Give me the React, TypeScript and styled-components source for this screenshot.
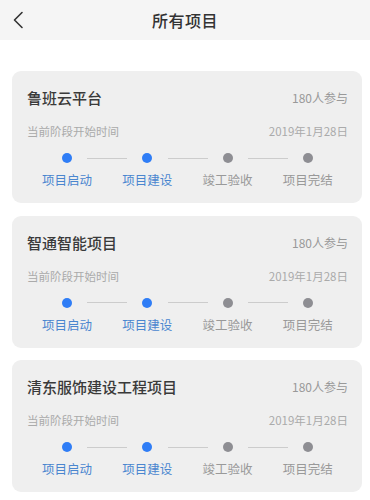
import styled, { createGlobalStyle } from "styled-components";

const GlobalStyle = createGlobalStyle`
  html, body { margin: 0; padding: 0; background: #ffffff; }
  body {
    font-family: "Noto Sans CJK SC", "Noto Sans", sans-serif;
    -webkit-font-smoothing: antialiased;
  }
`;

type Project = {
  name: string;
  people: number;
  date: string;
  current: number;
};

const STAGES = ["项目启动", "项目建设", "竣工验收", "项目完结"];

const projects: Project[] = [
  { name: "鲁班云平台", people: 180, date: "2019年1月28日", current: 1 },
  { name: "智通智能项目", people: 180, date: "2019年1月28日", current: 1 },
  { name: "清东服饰建设工程项目", people: 180, date: "2019年1月28日", current: 1 },
];

function BackIcon() {
  return (
    <svg width="12" height="18" viewBox="0 0 12 18" fill="none">
      <path d="M10 1.5 L2.5 9 L10 16.5" stroke="#333" strokeWidth="1.6" strokeLinecap="round" strokeLinejoin="round" />
    </svg>
  );
}

function ProjectCard({ project }: { project: Project }) {
  return (
    <Card>
      <TopRow>
        <Name>{project.name}</Name>
        <People>{project.people}人参与</People>
      </TopRow>
      <MetaRow>
        <MetaText>当前阶段开始时间</MetaText>
        <MetaText>{project.date}</MetaText>
      </MetaRow>
      <Steps>
        {STAGES.map((stage, i) => {
          const done = i <= project.current;
          return (
            <Step key={stage}>
              <DotRow>
                <HalfLine $side="left" $show={i > 0} />
                <Dot $active={done} />
                <HalfLine $side="right" $show={i < STAGES.length - 1} />
              </DotRow>
              <StepLabel $active={done}>{stage}</StepLabel>
            </Step>
          );
        })}
      </Steps>
    </Card>
  );
}

export default function App() {
  return (
    <Page>
      <GlobalStyle />
      <Header>
        <BackButton>
          <BackIcon />
        </BackButton>
        <HeaderTitle>所有项目</HeaderTitle>
      </Header>
      <List>
        {projects.map((p) => (
          <ProjectCard key={p.name} project={p} />
        ))}
      </List>
    </Page>
  );
}

const Page = styled.div`
  width: 370px;
  min-height: 500px;
  background: #ffffff;
`;

const Header = styled.header`
  position: relative;
  height: 40px;
  background: #f5f5f5;
  display: flex;
  align-items: center;
  justify-content: center;
`;

const BackButton = styled.div`
  position: absolute;
  left: 12px;
  top: 11px;
  display: flex;
`;

const HeaderTitle = styled.h1`
  margin: 0;
  font-size: 16px;
  font-weight: 500;
  color: #333333;
  line-height: 20px;
  letter-spacing: 0.5px;
  margin-top: -1px;
`;

const List = styled.div`
  display: flex;
  flex-direction: column;
  gap: 12.5px;
  padding: 31px 8px 0 12px;
`;

const Card = styled.div`
  background: #efefef;
  border-radius: 9px;
  padding: 17px 14px 14px 15px;
  display: flex;
  flex-direction: column;
`;

const TopRow = styled.div`
  display: flex;
  justify-content: space-between;
  align-items: center;
  height: 20px;
`;

const Name = styled.div`
  font-size: 15px;
  font-weight: 500;
  color: #3a3a3a;
  line-height: 20px;
`;

const People = styled.div`
  font-size: 12px;
  color: #999999;
  line-height: 16px;
`;

const MetaRow = styled.div`
  display: flex;
  justify-content: space-between;
  align-items: center;
  height: 16px;
  margin-top: 15px;
`;

const MetaText = styled.div`
  font-size: 11.5px;
  color: #aaaaaa;
  line-height: 16px;
`;

const Steps = styled.div`
  display: grid;
  grid-template-columns: repeat(4, 1fr);
  margin-top: 14px;
`;

const Step = styled.div`
  display: flex;
  flex-direction: column;
  align-items: center;
`;

const DotRow = styled.div`
  width: 100%;
  height: 10px;
  display: grid;
  grid-template-columns: 1fr 10px 1fr;
  align-items: center;
`;

const HalfLine = styled.div<{ $side: "left" | "right"; $show: boolean }>`
  height: 1px;
  width: 20px;
  background: ${(p) => (p.$show ? "#cccccc" : "transparent")};
  justify-self: ${(p) => (p.$side === "left" ? "start" : "end")};
`;

const Dot = styled.div<{ $active: boolean }>`
  width: 10px;
  height: 10px;
  border-radius: 50%;
  background: ${(p) => (p.$active ? "#2f7df6" : "#8e8e93")};
`;

const StepLabel = styled.div<{ $active: boolean }>`
  margin-top: 8px;
  font-size: 12.5px;
  line-height: 18px;
  color: ${(p) => (p.$active ? "#4a86cf" : "#999999")};
  white-space: nowrap;
`;
